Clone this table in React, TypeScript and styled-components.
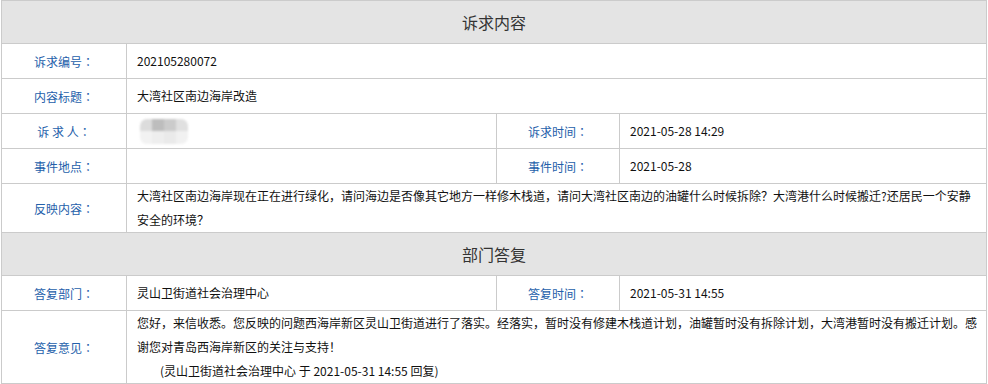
import styled, { createGlobalStyle } from "styled-components"

const GlobalStyle = createGlobalStyle`
    body{
        margin:0;
        background:#fff;
        font-family:"Noto Sans CJK SC", "Noto Sans", sans-serif;
    }
`

const Page = styled.div`
    padding-left:1px;
`

const Table = styled.table`
    width:986px;
    border-collapse:collapse;
    table-layout:fixed;
    border:1px solid #cbcbcb;
    font-size:12px;
    color:#111;

    & td, & th{
        border:1px solid #cbcbcb;
        padding:0;
    }
`

const Head = styled.th`
    background:#e4e4e4;
    height:42px;
    font-size:16px;
    font-weight:normal;
    color:#333;
    text-align:center;
`

const Label = styled.td<{ $h?: number }>`
    color:#2460aa;
    text-align:center;
    height:${p => p.$h || 34}px;
    white-space:pre;
    font-family:"Noto Sans CJK TC", "Noto Sans CJK SC", sans-serif;
`

const Value = styled.td`
    padding:0 4px 0 10px !important;
    line-height:24px;
    vertical-align:middle;
`

const Note = styled.div`
    padding-left:23px;
`

const Mosaic = styled.div`
    display:grid;
    grid-template-columns:repeat(4, 12px);
    grid-template-rows:12px 13px;
    width:48px;
    margin-left:3px;
    filter:blur(1px);
    border-radius:7px;
    overflow:hidden;
`

const Tile = styled.span<{ $c: string }>`
    background:${p => p.$c};
`

const tiles = ["#dcdcdc", "#bdbdbd", "#cbcbcb", "#e0e0e0", "#f2f2f2", "#eeeeee", "#eaeaea", "#f1f1f1"]

export default function App() {
    return (
        <Page>
            <GlobalStyle />
            <Table>
                <colgroup>
                    <col style={{ width: 125 }} />
                    <col style={{ width: 370 }} />
                    <col style={{ width: 123 }} />
                    <col style={{ width: 367 }} />
                </colgroup>
                <tbody>
                    <tr><Head colSpan={4}>诉求内容</Head></tr>
                    <tr>
                        <Label>诉求编号：</Label>
                        <Value colSpan={3}>202105280072</Value>
                    </tr>
                    <tr>
                        <Label>内容标题：</Label>
                        <Value colSpan={3}>大湾社区南边海岸改造</Value>
                    </tr>
                    <tr>
                        <Label>诉 求 人：</Label>
                        <Value>
                            <Mosaic>{tiles.map((c, i) => <Tile key={i} $c={c} />)}</Mosaic>
                        </Value>
                        <Label>诉求时间：</Label>
                        <Value>2021-05-28 14:29</Value>
                    </tr>
                    <tr>
                        <Label>事件地点：</Label>
                        <Value></Value>
                        <Label>事件时间：</Label>
                        <Value>2021-05-28</Value>
                    </tr>
                    <tr>
                        <Label $h={48}>反映内容：</Label>
                        <Value colSpan={3}>大湾社区南边海岸现在正在进行绿化，请问海边是否像其它地方一样修木栈道，请问大湾社区南边的油罐什么时候拆除？大湾港什么时候搬迁?还居民一个安静安全的环境？</Value>
                    </tr>
                    <tr><Head colSpan={4}>部门答复</Head></tr>
                    <tr>
                        <Label>答复部门：</Label>
                        <Value>灵山卫街道社会治理中心</Value>
                        <Label>答复时间：</Label>
                        <Value>2021-05-31 14:55</Value>
                    </tr>
                    <tr>
                        <Label $h={72}>答复意见：</Label>
                        <Value colSpan={3}>
                            您好，来信收悉。您反映的问题西海岸新区灵山卫街道进行了落实。经落实，暂时没有修建木栈道计划，油罐暂时没有拆除计划，大湾港暂时没有搬迁计划。感谢您对青岛西海岸新区的关注与支持！
                            <Note>(灵山卫街道社会治理中心 于 2021-05-31 14:55 回复)</Note>
                        </Value>
                    </tr>
                </tbody>
            </Table>
        </Page>
    )
}
